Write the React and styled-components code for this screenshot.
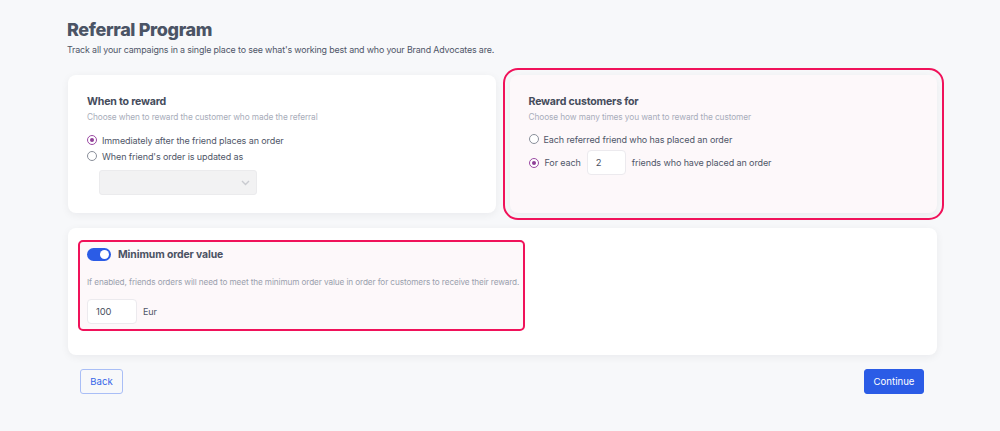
import styled, { createGlobalStyle } from "styled-components";

const GlobalStyle = createGlobalStyle`
  body {
    margin: 0;
    background: #f7f8fa;
    font-family: Inter, "Open Sans", sans-serif;
    color: #4a5264;
  }
`;

const Page = styled.div`
  width: 869px;
  margin-left: 68px;
  padding-top: 18px;
`;

const Title = styled.h1`
  margin: 0 0 0 -1px;
  font-size: 18px;
  font-weight: 800;
  letter-spacing: -0.35px;
  color: #4b5465;
  line-height: 24px;
`;

const Subtitle = styled.p`
  margin: 2px 0 0 -1px;
  font-size: 8.9px;
  letter-spacing: -0.15px;
  color: #4f5668;
`;

const TopRow = styled.div`
  display: grid;
  grid-template-columns: 1fr 1fr;
  gap: 14px;
  margin-top: 20px;
`;

const Card = styled.section`
  background: ${(p) => (p.highlight ? "#fdf8fa" : "#ffffff")};
  border-radius: 8px;
  box-shadow: 0 2px 8px rgba(16, 24, 40, 0.06);
  padding: 20px 19px;
  height: ${(p) => p.h}px;
  box-sizing: border-box;
  outline: ${(p) => (p.highlight ? "2px solid #f0125a" : "none")};
  outline-offset: 5px;
`;

const CardTitle = styled.h2`
  margin: 0;
  font-size: 10.6px;
  font-weight: 700;
  color: #454c5c;
  letter-spacing: -0.2px;
`;

const CardHint = styled.p`
  margin: 4px 0 0;
  font-size: 8.3px;
  color: #a8adba;
  letter-spacing: -0.1px;
`;

const Options = styled.div`
  display: flex;
  flex-direction: column;
  gap: ${(p) => p.gap || 6}px;
  margin-top: ${(p) => p.top || 13}px;
`;

const Option = styled.label`
  display: flex;
  align-items: center;
  gap: 5px;
  font-size: 9px;
  color: #4f5668;
  letter-spacing: -0.1px;
  height: 10px;
`;

const Radio = styled.span`
  width: 8px;
  height: 8px;
  flex: none;
  border-radius: 50%;
  border: 1px solid ${(p) => (p.checked ? "#9b4aa3" : "#8a8f9a")};
  background: #fff;
  display: flex;
  align-items: center;
  justify-content: center;

  &::after {
    content: "";
    display: ${(p) => (p.checked ? "block" : "none")};
    width: 4px;
    height: 4px;
    border-radius: 50%;
    background: #8f3f97;
  }
`;

const Select = styled.div`
  width: 158px;
  height: 25px;
  margin: 9px 0 0 12px;
  box-sizing: border-box;
  background: #f2f2f3;
  border: 1px solid #ebebed;
  border-radius: 3px;
  display: flex;
  align-items: center;
  justify-content: flex-end;
  padding-right: 6px;
`;

const SmallInput = styled.div`
  width: ${(p) => p.w}px;
  height: 25px;
  box-sizing: border-box;
  background: #fff;
  border: 1px solid #eceaee;
  border-radius: 4px;
  display: flex;
  align-items: center;
  padding-left: 8px;
  font-size: 9.4px;
  color: #4a5060;
`;

const InlineRow = styled.div`
  display: flex;
  align-items: center;
  gap: ${(p) => p.gap || 6}px;
  font-size: 9px;
  letter-spacing: -0.1px;
  color: #4f5668;
`;

const ForEach = styled(InlineRow)`
  height: 25px;
  margin-top: -2px;
`;

const BottomCard = styled.section`
  margin-top: 15px;
  background: #fff;
  border-radius: 8px;
  box-shadow: 0 2px 8px rgba(16, 24, 40, 0.06);
  padding: 12px 10px 24px;
`;

const Highlight = styled.div`
  width: 447px;
  height: 91px;
  box-sizing: border-box;
  border: 2px solid #f0125a;
  border-radius: 5px;
  background: #fdf8fa;
  padding: 6px 7px;
`;

const ToggleRow = styled.div`
  display: flex;
  align-items: center;
  gap: 7px;
`;

const Toggle = styled.span`
  width: 24px;
  height: 13px;
  border-radius: 7px;
  background: #2b5ce6;
  position: relative;
  flex: none;

  &::after {
    content: "";
    position: absolute;
    right: 2px;
    top: 2px;
    width: 9px;
    height: 9px;
    border-radius: 50%;
    background: #fff;
  }
`;

const ToggleLabel = styled.span`
  font-size: 10.4px;
  font-weight: 700;
  letter-spacing: -0.1px;
  color: #4b5263;
`;

const Desc = styled.p`
  margin: 16px 0 12px;
  font-size: 8.2px;
  color: #9aa0ad;
  letter-spacing: -0.1px;
  white-space: nowrap;
`;

const Actions = styled.div`
  display: flex;
  justify-content: space-between;
  padding: 0 13px 0 12px;
  margin-top: 14px;
`;

const Button = styled.button`
  height: 25px;
  padding: 0 8px;
  font-family: Inter, "Open Sans", sans-serif;
  font-size: 9.6px;
  border-radius: 3px;
  border: 1px solid ${(p) => (p.primary ? "#2b5ce6" : "#a9bef6")};
  background: ${(p) => (p.primary ? "#2b5ce6" : "transparent")};
  color: ${(p) => (p.primary ? "#ffffff" : "#3566e8")};
  min-width: ${(p) => (p.primary ? 60 : 43)}px;
`;

function Chevron() {
  return (
    <svg width="9" height="6" viewBox="0 0 9 6" fill="none">
      <path d="M1 1l3.5 3.5L8 1" stroke="#c9cbd0" strokeWidth="1.4" />
    </svg>
  );
}

export default function App() {
  return (
    <>
      <GlobalStyle />
      <Page>
        <Title>Referral Program</Title>
        <Subtitle>
          Track all your campaigns in a single place to see what's working best
          and who your Brand Advocates are.
        </Subtitle>

        <TopRow>
          <Card h={138}>
            <CardTitle>When to reward</CardTitle>
            <CardHint>Choose when to reward the customer who made the referral</CardHint>
            <Options>
              <Option>
                <Radio checked />
                Immediately after the friend places an order
              </Option>
              <Option>
                <Radio />
                When friend's order is updated as
              </Option>
            </Options>
            <Select>
              <Chevron />
            </Select>
          </Card>

          <Card h={138} highlight>
            <CardTitle>Reward customers for</CardTitle>
            <CardHint>Choose how many times you want to reward the customer</CardHint>
            <Options gap={8} top={12}>
              <Option>
                <Radio />
                Each referred friend who has placed an order
              </Option>
              <ForEach>
                <Radio checked />
                <span>For each</span>
                <SmallInput w={39}>2</SmallInput>
                <span>friends who have placed an order</span>
              </ForEach>
            </Options>
          </Card>
        </TopRow>

        <BottomCard>
          <Highlight>
            <ToggleRow>
              <Toggle />
              <ToggleLabel>Minimum order value</ToggleLabel>
            </ToggleRow>
            <Desc>
              If enabled, friends orders will need to meet the minimum order
              value in order for customers to receive their reward.
            </Desc>
            <InlineRow gap={6}>
              <SmallInput w={50}>100</SmallInput>
              <span>Eur</span>
            </InlineRow>
          </Highlight>
        </BottomCard>

        <Actions>
          <Button>Back</Button>
          <Button primary>Continue</Button>
        </Actions>
      </Page>
    </>
  );
}
